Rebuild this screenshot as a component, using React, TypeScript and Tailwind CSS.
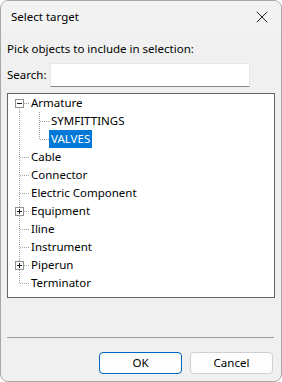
import { X } from 'lucide-react';

type Cell = 'pipe' | 'tee' | 'last' | 'blank';

interface Row {
  label: string;
  cells: Cell[];
  box?: 'minus' | 'plus';
  first?: boolean;
  selected?: boolean;
}

const rows: Row[] = [
  { label: 'Armature', cells: ['tee'], box: 'minus', first: true },
  { label: 'SYMFITTINGS', cells: ['pipe', 'tee'] },
  { label: 'VALVES', cells: ['pipe', 'last'], selected: true },
  { label: 'Cable', cells: ['tee'] },
  { label: 'Connector', cells: ['tee'] },
  { label: 'Electric Component', cells: ['tee'] },
  { label: 'Equipment', cells: ['tee'], box: 'plus' },
  { label: 'Iline', cells: ['tee'] },
  { label: 'Instrument', cells: ['tee'] },
  { label: 'Piperun', cells: ['tee'], box: 'plus' },
  { label: 'Terminator', cells: ['last'] },
];

function LineCell({ kind, box, first }: { kind: Cell; box?: 'minus' | 'plus'; first?: boolean }) {
  const dot = { stroke: '#a0a0a0', strokeWidth: 1, strokeDasharray: '1 1', shapeRendering: 'crispEdges' as const };
  const vTop = first ? 9 : 0;
  return (
    <svg width="20" height="18" viewBox="0 0 20 18" className="shrink-0">
      {kind !== 'blank' && (
        <line x1="10.5" y1={vTop} x2="10.5" y2={kind === 'last' ? 9 : 18} {...dot} />
      )}
      {(kind === 'tee' || kind === 'last') && <line x1="11" y1="9.5" x2="20" y2="9.5" {...dot} />}
      {box && (
        <g shapeRendering="crispEdges">
          <rect x="6.5" y="5.5" width="8" height="8" fill="#fff" stroke="#919191" />
          <line x1="8" y1="9.5" x2="13" y2="9.5" stroke="#1c1c1c" />
          {box === 'plus' && <line x1="10.5" y1="7" x2="10.5" y2="12" stroke="#1c1c1c" />}
        </g>
      )}
    </svg>
  );
}

export default function App() {
  return (
    <div
      className="w-[282px] h-[382px] bg-white text-[11.5px] text-black"
      style={{ fontFamily: '"Noto Sans", "Liberation Sans", sans-serif' }}
    >
      <div className="w-full h-full flex flex-col rounded-lg border border-[#a8a8a8] bg-[#f0f0f0] overflow-hidden">
        {/* title bar */}
        <div className="h-[31px] shrink-0 flex items-center justify-between bg-[#f3f3f3] pl-[10px] pr-[9px]">
          <span>Select target</span>
          <X className="w-[20px] h-[20px] text-[#1a1a1a]" strokeWidth={1.15} />
        </div>

        <div className="flex-1 flex flex-col px-[6px]">
          <div className="h-[18px] mt-[8px] flex items-center">Pick objects to include in selection:</div>

          <div className="mt-[5px] flex items-center gap-[6px]">
            <span className="w-[37px]">Search:</span>
            <div className="w-[200px] h-[24px] bg-white border border-[#e6e6e6] border-b-[#868686]" />
          </div>

          <div className="mt-[6px] h-[205px] bg-white border border-[#646464]">
            {rows.map((r) => (
              <div key={r.label} className="h-[18px] flex items-center pl-[1px]">
                {r.cells.map((c, i) => (
                  <LineCell
                    key={i}
                    kind={c}
                    box={i === r.cells.length - 1 ? r.box : undefined}
                    first={i === 0 && r.first}
                  />
                ))}
                <span
                  className={`h-[18px] flex items-center px-[2px] whitespace-nowrap ${
                    r.selected ? 'bg-[#0078d7] text-white' : ''
                  }`}
                >
                  {r.label}
                </span>
              </div>
            ))}
          </div>

          <div className="mt-[39px] h-px bg-[#a0a0a0] mr-[1px]" />

          <div className="mt-[14px] flex justify-end gap-[8px] pr-[2px]">
            <button className="w-[83px] h-[22px] rounded-[4px] bg-[#fdfdfd] border border-[#0067c0]">OK</button>
            <button className="w-[83px] h-[22px] rounded-[4px] bg-[#fdfdfd] border border-[#d0d0d0]">Cancel</button>
          </div>
        </div>
      </div>
    </div>
  );
}
